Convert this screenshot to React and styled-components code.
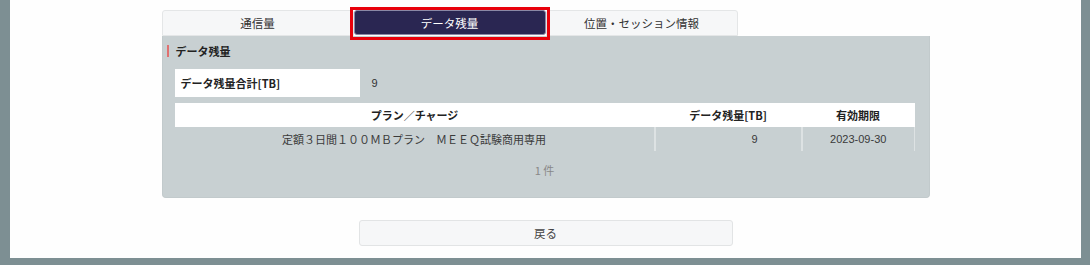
import React from "react";
import styled, { createGlobalStyle } from "styled-components";

const Global = createGlobalStyle`
  html, body { margin: 0; padding: 0; }
  body {
    background: #7d8f93;
    font-family: "Noto Sans CJK JP", "Liberation Sans", sans-serif;
    font-size: 11px;
    color: #333;
  }
`;

const Page = styled.div`
  margin-left: 10px;
  width: 1071px;
  height: 258px;
  background: #fefefe;
  display: flex;
  flex-direction: column;
  align-items: center;
  padding-top: 10px;
  box-sizing: border-box;
`;

const Column = styled.div`
  width: 768px;
  display: flex;
  flex-direction: column;
  align-items: center;
`;

const Tabs = styled.div`
  position: relative;
  z-index: 2;
  align-self: flex-start;
  display: grid;
  grid-template-columns: repeat(3, 192px);
  height: 26px;
`;

const Tab = styled.div`
  position: relative;
  display: flex;
  align-items: center;
  justify-content: center;
  box-sizing: border-box;
  font-size: 11.5px;
  border-radius: 3px 3px 0 0;
  background: ${(p) => (p.$active ? "#2a2652" : "#f6f7f8")};
  color: ${(p) => (p.$active ? "#ffffff" : "#333")};
  border: 1px solid ${(p) => (p.$active ? "#8b88a6" : "#e4e6e7")};
  ${(p) => p.$active && "border-radius: 3px; margin: 0 0 1px 0;"}
`;

const Highlight = styled.div`
  position: absolute;
  z-index: 3;
  left: -5px;
  right: -5px;
  top: -4px;
  bottom: -6px;
  border: 3px solid #e8000b;
  pointer-events: none;
`;

const Panel = styled.div`
  width: 100%;
  box-sizing: border-box;
  background: #c8d0d2;
  border-radius: 0 0 4px 4px;
  border: 1px solid #c2cacc;
  border-top: none;
  padding: 6px 14px 0 12px;
  height: 162px;
  display: flex;
  flex-direction: column;
`;

const SectionTitle = styled.div`
  margin-left: -8px;
  padding-left: 7px;
  border-left: 2px solid #e07070;
  height: 12px;
  line-height: 12px;
  font-weight: bold;
  font-size: 11px;
  color: #222;
  margin-top: 3px;
`;

const SummaryRow = styled.div`
  display: flex;
  align-items: center;
  margin-top: 12px;
  height: 28px;
`;

const SummaryLabel = styled.div`
  width: 185px;
  height: 100%;
  background: #fff;
  display: flex;
  align-items: center;
  padding-left: 6px;
  box-sizing: border-box;
  font-weight: bold;
  color: #222;
`;

const SummaryValue = styled.div`
  padding-left: 12px;
  font-family: "Liberation Sans", sans-serif;
  color: #333;
`;

const Table = styled.table`
  margin-top: 6px;
  width: 740px;
  border-collapse: collapse;
  table-layout: fixed;
`;

const Th = styled.th`
  background: #fff;
  height: 24px;
  padding: 0;
  font-weight: bold;
  color: #222;
  font-size: 11px;
  text-align: center;
`;

const Td = styled.td`
  height: 24px;
  padding: ${(p) => (p.$align === "right" ? "0 43px 0 0" : "0")};
  text-align: ${(p) => p.$align || "center"};
  color: #3a3a3a;
  font-size: 11px;
  border-left: ${(p) => (p.$first ? "none" : "2px solid #dde2e3")};
  border-right: ${(p) => (p.$last ? "1px solid #dde2e3" : "none")};
  font-family: ${(p) => (p.$latin ? '"Liberation Sans", sans-serif' : "inherit")};
`;

const Count = styled.div`
  text-align: center;
  margin-top: 11px;
  color: #888;
  font-size: 11px;
`;

const BackButton = styled.button`
  margin-top: 22px;
  width: 374px;
  height: 26px;
  background: #f6f7f8;
  border: 1px solid #e2e4e5;
  border-radius: 3px;
  font-family: "Noto Sans CJK JP", sans-serif;
  font-size: 11.5px;
  color: #444;
  cursor: pointer;
`;

export default function App() {
  return (
    <>
      <Global />
      <Page>
        <Column>
          <Tabs>
            <Tab>通信量</Tab>
            <Tab $active>
              データ残量
              <Highlight />
            </Tab>
            <Tab>位置・セッション情報</Tab>
          </Tabs>
          <Panel>
            <SectionTitle>データ残量</SectionTitle>
            <SummaryRow>
              <SummaryLabel>データ残量合計[TB]</SummaryLabel>
              <SummaryValue>9</SummaryValue>
            </SummaryRow>
            <Table>
              <colgroup>
                <col style={{ width: 480 }} />
                <col style={{ width: 147 }} />
                <col style={{ width: 113 }} />
              </colgroup>
              <thead>
                <tr>
                  <Th>プラン／チャージ</Th>
                  <Th>データ残量[TB]</Th>
                  <Th>有効期限</Th>
                </tr>
              </thead>
              <tbody>
                <tr>
                  <Td $first>定額３日間１００ＭＢプラン　ＭＥＥＱ試験商用専用</Td>
                  <Td $align="right" $latin>9</Td>
                  <Td $last $latin>2023-09-30</Td>
                </tr>
              </tbody>
            </Table>
            <Count>1 件</Count>
          </Panel>
          <BackButton>戻る</BackButton>
        </Column>
      </Page>
    </>
  );
}
